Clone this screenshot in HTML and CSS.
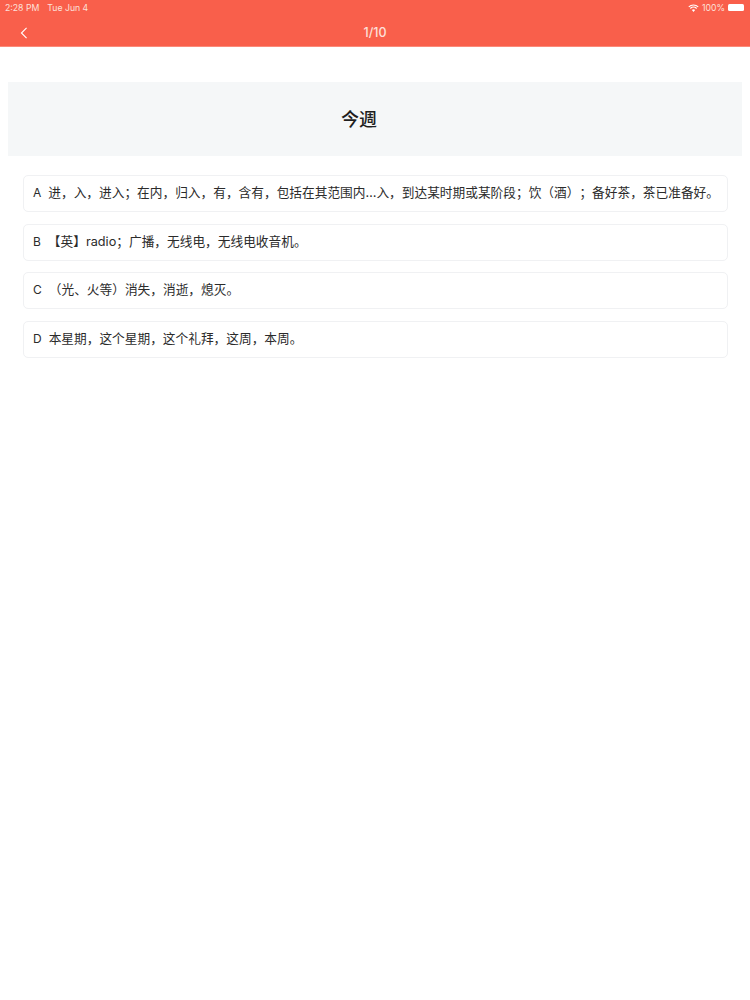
FILE: index.html
```html
<!DOCTYPE html>
<html lang="zh-CN">
<head>
<meta charset="utf-8">
<title>今週</title>
<link rel="stylesheet" href="styles.css">
</head>
<body>
<header class="header">
  <div class="status">
    <div class="status-left"><span>2:28 PM</span><span>Tue Jun 4</span></div>
    <div class="status-right">
      <svg class="wifi" viewBox="0 0 14 10" width="11" height="8"><path d="M7 10 4.9 7.6a3 3 0 0 1 4.2 0Z" fill="#fff"/><path d="M1 3.6a8.6 8.6 0 0 1 12 0" fill="none" stroke="#fff" stroke-width="1.5"/><path d="M3 5.6a5.7 5.7 0 0 1 8 0" fill="none" stroke="#fff" stroke-width="1.5"/></svg>
      <span>100%</span>
      <span class="battery"><span class="battery-fill"></span></span>
    </div>
  </div>
  <div class="nav">
    <svg class="back" viewBox="0 0 9 14" width="8" height="12"><path d="M7.5 1 1.5 7l6 6" fill="none" stroke="#fff" stroke-width="1.3"/></svg>
    <div class="nav-title">1/10</div>
  </div>
</header>
<main class="main">
  <section class="question"><h1>今週</h1></section>
  <ul class="options">
    <li class="option"><span class="letter">A</span><span>进，入，进入；在内，归入，有，含有，包括在其范围内…入，到达某时期或某阶段；饮（酒）；备好茶，茶已准备好。</span></li>
    <li class="option"><span class="letter">B</span><span>【英】radio；广播，无线电，无线电收音机。</span></li>
    <li class="option"><span class="letter">C</span><span>（光、火等）消失，消逝，熄灭。</span></li>
    <li class="option"><span class="letter">D</span><span>本星期，这个星期，这个礼拜，这周，本周。</span></li>
  </ul>
</main>
</body>
</html>
```
FILE: styles.css
```css
* { box-sizing: border-box; }
html, body { margin: 0; padding: 0; }
body {
  width: 750px;
  height: 1000px;
  overflow: hidden;
  background: #fff;
  color: #222;
  font-family: "Inter", "Noto Sans CJK SC", sans-serif;
  text-spacing-trim: space-all;
}
.header {
  height: 47px;
  background: #f95f4b;
  color: #fff;
  border-bottom: 1px solid #fb8a79;
}
.status {
  height: 15px;
  display: flex;
  justify-content: space-between;
  align-items: center;
  padding: 0 4px 0 5px;
  font-size: 8.7px;
  color: #fde0da;
}
.status-left { display: flex; gap: 8px; }
.status-right { display: flex; align-items: center; gap: 3px; }
.battery {
  width: 18px;
  height: 7px;
  display: block;
  padding-right: 1px;
}
.battery-fill { display: block; width: 16px; height: 7px; background: #fff; border-radius: 1.5px; }
.nav {
  height: 31px;
  position: relative;
  display: flex;
  align-items: center;
  justify-content: center;
  padding-top: 4px;
}
.back { position: absolute; left: 20px; top: 12px; }
.nav-title { font-size: 12.5px; font-weight: 500; color: #fde0da; }
.main { padding: 35px 8px 0; }
.question {
  height: 74px;
  background: #f5f7f8;
  display: flex;
  align-items: center;
  justify-content: center;
  padding: 0 32px 2px 0;
}
.question h1 {
  margin: 0;
  font-size: 18px;
  font-weight: 500;
  color: #1e1e1e;
  font-family: "Noto Sans CJK JP", sans-serif;
}
.options {
  list-style: none;
  margin: 19px 14px 0 15px;
  padding: 0;
  display: flex;
  flex-direction: column;
  gap: 11.6px;
}
.option {
  height: 37px;
  display: flex;
  align-items: baseline;
  gap: 7px;
  padding: 0 9px;
  line-height: 34px;
  background: #fff;
  border: 1px solid #f0f1f3;
  border-radius: 5px;
  font-size: 12.7px;
  color: #2b2b2b;
  white-space: nowrap;
}
.letter { font-size: 12px; }
```
